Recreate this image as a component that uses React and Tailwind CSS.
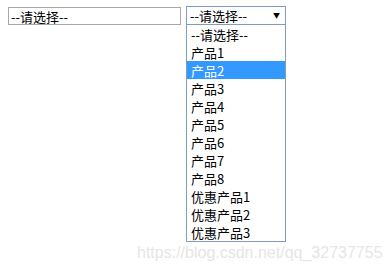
const options = ['--请选择--', '产品1', '产品2', '产品3', '产品4', '产品5', '产品6', '产品7', '产品8', '优惠产品1', '优惠产品2', '优惠产品3'];

export default function App() {
  return (
    <div
      className="relative h-[273px] w-[390px] overflow-hidden bg-white text-[13px] text-black"
      style={{ fontFamily: '"Noto Sans CJK SC", "Microsoft YaHei", sans-serif' }}
    >
      <div className="flex items-start gap-[5px] pl-2 pt-[6px]">
        <div className="mt-px flex h-[18px] w-[173px] items-center border border-[#a9a9a9] pl-[2px] leading-none">
          --请选择--
        </div>
        <div className="relative w-[100px]">
          <div className="flex h-[19px] items-center justify-between border border-[#7a9cd3] pl-[3px] pr-[5px] leading-none">
            <span>--请选择--</span>
            <span className="text-[7px]">▼</span>
          </div>
          <ul className="absolute left-0 top-[18px] w-[100px] border border-[#7f9db9] bg-white">
            {options.map((o, i) => (
              <li
                key={o}
                className={`flex h-[18px] items-center pl-[4px] pt-px leading-none ${i === 2 ? 'bg-[#3399ff] text-white' : ''}`}
              >
                {o}
              </li>
            ))}
          </ul>
        </div>
      </div>
      <div
        className="absolute left-[137px] top-[245px] text-[16px] leading-none text-[#e6e6e6]"
        style={{ fontFamily: '"Liberation Sans", Arial, sans-serif' }}
      >
        https://blog.csdn.net/qq_32737755
      </div>
    </div>
  );
}
